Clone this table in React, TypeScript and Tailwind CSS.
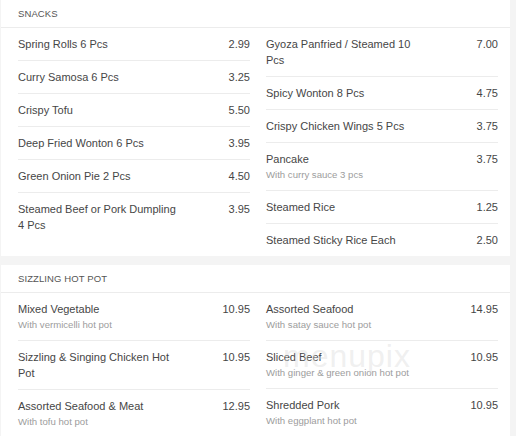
import React from "react";

interface Item {
  name: string;
  price: string;
  note?: string;
}

interface Section {
  title: string;
  left: Item[];
  right: Item[];
}

const sections: Section[] = [
  {
    title: "SNACKS",
    left: [
      { name: "Spring Rolls 6 Pcs", price: "2.99" },
      { name: "Curry Samosa 6 Pcs", price: "3.25" },
      { name: "Crispy Tofu", price: "5.50" },
      { name: "Deep Fried Wonton 6 Pcs", price: "3.95" },
      { name: "Green Onion Pie 2 Pcs", price: "4.50" },
      { name: "Steamed Beef or Pork Dumpling 4 Pcs", price: "3.95" },
    ],
    right: [
      { name: "Gyoza Panfried / Steamed 10 Pcs", price: "7.00" },
      { name: "Spicy Wonton 8 Pcs", price: "4.75" },
      { name: "Crispy Chicken Wings 5 Pcs", price: "3.75" },
      { name: "Pancake", price: "3.75", note: "With curry sauce 3 pcs" },
      { name: "Steamed Rice", price: "1.25" },
      { name: "Steamed Sticky Rice Each", price: "2.50" },
    ],
  },
  {
    title: "SIZZLING HOT POT",
    left: [
      { name: "Mixed Vegetable", price: "10.95", note: "With vermicelli hot pot" },
      { name: "Sizzling & Singing Chicken Hot Pot", price: "10.95" },
      { name: "Assorted Seafood & Meat", price: "12.95", note: "With tofu hot pot" },
    ],
    right: [
      { name: "Assorted Seafood", price: "14.95", note: "With satay sauce hot pot" },
      { name: "Sliced Beef", price: "10.95", note: "With ginger & green onion hot pot" },
      { name: "Shredded Pork", price: "10.95", note: "With eggplant hot pot" },
    ],
  },
];

function Row({ item }: { item: Item }) {
  return (
    <div className="flex justify-between py-2 border-b border-[#ececec] last:border-b-0">
      <div className="w-[162px]">
        <p className="text-[11px] leading-[16px] text-[#464646]">{item.name}</p>
        {item.note && (
          <p className="text-[9.6px] leading-[15px] text-[#9d9d9d]">{item.note}</p>
        )}
      </div>
      <span className="text-[11px] leading-[16px] text-[#464646]">{item.price}</span>
    </div>
  );
}

function MenuSection({ section }: { section: Section }) {
  return (
    <div className="bg-white">
      <div className="h-[28px] flex items-center pt-[2px] pl-[17px] border-b border-[#ececec]">
        <h2 className="text-[9.5px] text-[#555] tracking-[0.1px]">{section.title}</h2>
      </div>
      <div className="grid grid-cols-[232px_232px] gap-x-4 pl-[17px] pr-3">
        <div className="flex flex-col">
          {section.left.map((item) => (
            <Row key={item.name} item={item} />
          ))}
        </div>
        <div className="flex flex-col">
          {section.right.map((item) => (
            <Row key={item.name} item={item} />
          ))}
        </div>
      </div>
    </div>
  );
}

export default function App() {
  return (
    <div
      className="relative h-[436px] overflow-hidden bg-[#f4f4f4] pl-px pr-[6px]"
      style={{ fontFamily: '"Liberation Sans", Arial, sans-serif' }}
    >
      <div className="flex flex-col gap-[9px]">
        {sections.map((s) => (
          <MenuSection key={s.title} section={s} />
        ))}
      </div>
      <span className="pointer-events-none absolute left-[283px] top-[332px] text-[32px] font-light text-[#d8d8d8]/40 tracking-[1px] select-none">
        menupix
      </span>
    </div>
  );
}
